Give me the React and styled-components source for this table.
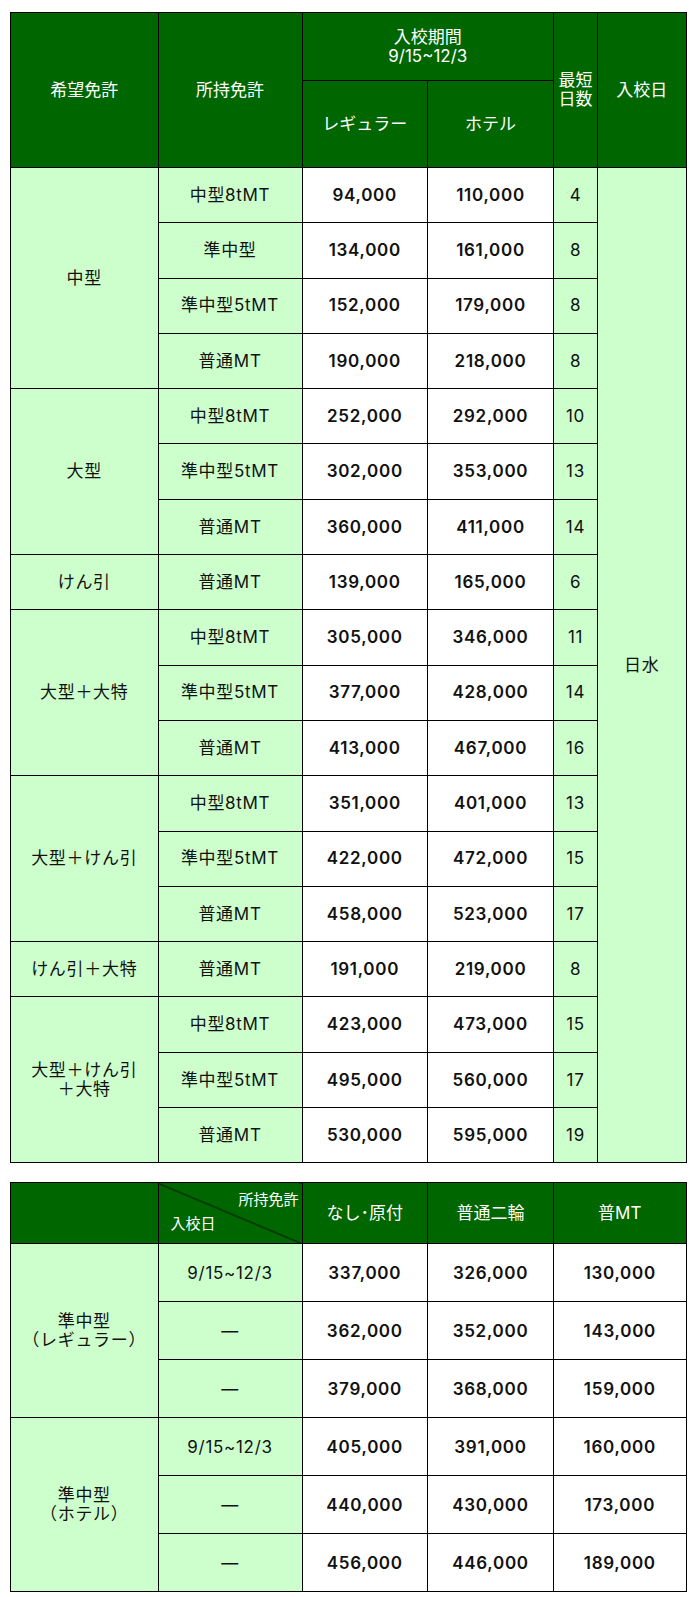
import React from "react";
import styled, { createGlobalStyle } from "styled-components";

const GlobalStyle = createGlobalStyle`
	body {
		margin: 0;
		background: #ffffff;
		font-family: Inter, "Noto Sans CJK JP", sans-serif;
		color: #111111;
	}
`;

const COLS = [147.5, 144, 125.5, 126, 44, 88.5];
const COLS2 = [147.5, 144, 125.5, 126, 132.5];

const courses = [
	{
		name: ["中型"],
		rows: [
			["中型8tMT", "94,000", "110,000", "4"],
			["準中型", "134,000", "161,000", "8"],
			["準中型5tMT", "152,000", "179,000", "8"],
			["普通MT", "190,000", "218,000", "8"],
		],
	},
	{
		name: ["大型"],
		rows: [
			["中型8tMT", "252,000", "292,000", "10"],
			["準中型5tMT", "302,000", "353,000", "13"],
			["普通MT", "360,000", "411,000", "14"],
		],
	},
	{ name: ["けん引"], rows: [["普通MT", "139,000", "165,000", "6"]] },
	{
		name: ["大型＋大特"],
		rows: [
			["中型8tMT", "305,000", "346,000", "11"],
			["準中型5tMT", "377,000", "428,000", "14"],
			["普通MT", "413,000", "467,000", "16"],
		],
	},
	{
		name: ["大型＋けん引"],
		rows: [
			["中型8tMT", "351,000", "401,000", "13"],
			["準中型5tMT", "422,000", "472,000", "15"],
			["普通MT", "458,000", "523,000", "17"],
		],
	},
	{ name: ["けん引＋大特"], rows: [["普通MT", "191,000", "219,000", "8"]] },
	{
		name: ["大型＋けん引", "＋大特"],
		rows: [
			["中型8tMT", "423,000", "473,000", "15"],
			["準中型5tMT", "495,000", "560,000", "17"],
			["普通MT", "530,000", "595,000", "19"],
		],
	},
];

const semi = [
	{
		name: ["準中型", "（レギュラー）"],
		rows: [
			["9/15~12/3", "337,000", "326,000", "130,000"],
			["―", "362,000", "352,000", "143,000"],
			["―", "379,000", "368,000", "159,000"],
		],
	},
	{
		name: ["準中型", "（ホテル）"],
		rows: [
			["9/15~12/3", "405,000", "391,000", "160,000"],
			["―", "440,000", "430,000", "173,000"],
			["―", "456,000", "446,000", "189,000"],
		],
	},
];

function Lines({ items }) {
	return items.map((t, i) => (
		<React.Fragment key={i}>
			{i > 0 && <br />}
			{t}
		</React.Fragment>
	));
}

export default function App() {
	let first = true;
	return (
		<Page>
			<GlobalStyle />
			<Table>
				<colgroup>
					{COLS.map((w, i) => (
						<col key={i} style={{ width: w }} />
					))}
				</colgroup>
				<thead>
					<Row $h={68}>
						<Head rowSpan={2}>希望免許</Head>
						<Head rowSpan={2}>所持免許</Head>
						<Head colSpan={2}>
							入校期間
							<br />
							9/15~12/3
						</Head>
						<Head rowSpan={2}>
							最短
							<br />
							日数
						</Head>
						<Head rowSpan={2}>入校日</Head>
					</Row>
					<Row $h={87}>
						<Head>レギュラー</Head>
						<Head>ホテル</Head>
					</Row>
				</thead>
				<tbody>
					{courses.map((c) =>
						c.rows.map((r, i) => {
							const showDay = first;
							first = false;
							return (
								<Row key={c.name.join() + i} $h={55.3}>
									{i === 0 && (
										<Cell $tone="light" rowSpan={c.rows.length}>
											<Lines items={c.name} />
										</Cell>
									)}
									<Cell $tone="light">{r[0]}</Cell>
									<Cell $bold>{r[1]}</Cell>
									<Cell $bold>{r[2]}</Cell>
									<Cell $tone="light">{r[3]}</Cell>
									{showDay && (
										<Cell $tone="light" rowSpan={18}>
											日水
										</Cell>
									)}
								</Row>
							);
						})
					)}
				</tbody>
			</Table>

			<Table>
				<colgroup>
					{COLS2.map((w, i) => (
						<col key={i} style={{ width: w }} />
					))}
				</colgroup>
				<thead>
					<Row $h={61}>
						<Head />
						<SplitHead>
							<SplitLabel $side="end">所持免許</SplitLabel>
							<SplitLabel $side="start">入校日</SplitLabel>
						</SplitHead>
						<Head>なし･原付</Head>
						<Head>普通二輪</Head>
						<Head>普MT</Head>
					</Row>
				</thead>
				<tbody>
					{semi.map((g) =>
						g.rows.map((r, i) => (
							<Row key={g.name.join() + i} $h={58}>
								{i === 0 && (
									<Cell $tone="light" rowSpan={g.rows.length}>
										<Lines items={g.name} />
									</Cell>
								)}
								<Cell $tone="light">{r[0]}</Cell>
								<Cell $bold>{r[1]}</Cell>
								<Cell $bold>{r[2]}</Cell>
								<Cell $bold>{r[3]}</Cell>
							</Row>
						))
					)}
				</tbody>
			</Table>
		</Page>
	);
}

const Page = styled.div`
	display: flex;
	flex-direction: column;
	gap: 19px;
	padding: 12px 3px 6px 10px;
`;

const Table = styled.table`
	width: 676px;
	border-collapse: collapse;
	table-layout: fixed;
	font-size: 17px;
	line-height: 1.1;
`;

const Row = styled.tr`
	height: ${(p) => p.$h}px;
`;

const Head = styled.th`
	border: 1px solid #000;
	background: #006600;
	color: #ffffff;
	font-weight: 400;
	text-align: center;
	vertical-align: middle;
	padding: 0 2px;
`;

const SplitHead = styled.th`
	border: 1px solid #000;
	padding: 4px 3px 6px 12px;
	color: #ffffff;
	font-weight: 400;
	font-size: 15px;
	background: linear-gradient(
		to top right,
		#006600 calc(50% - 0.8px),
		#000000 50%,
		#006600 calc(50% + 0.8px)
	);
	& > span {
		display: block;
	}
`;

const SplitLabel = styled.span`
	text-align: ${(p) => p.$side};
	line-height: 24px;
`;

const Cell = styled.td`
	border: 1px solid #000;
	text-align: center;
	vertical-align: middle;
	padding: 0 2px;
	letter-spacing: 0.7px;
	background: ${(p) => (p.$tone === "light" ? "#ccffcc" : "#ffffff")};
	font-weight: ${(p) => (p.$bold ? 600 : 400)};
	color: #111111;
`;
